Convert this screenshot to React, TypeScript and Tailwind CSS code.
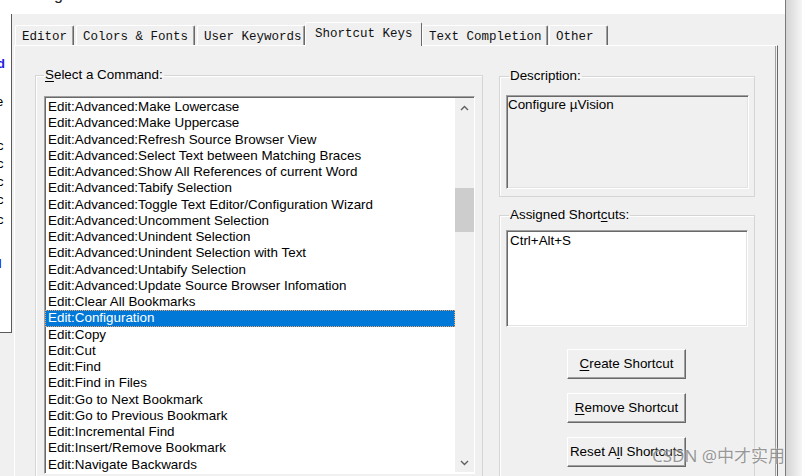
import React from "react";

const commands = [
  "Edit:Advanced:Make Lowercase",
  "Edit:Advanced:Make Uppercase",
  "Edit:Advanced:Refresh Source Browser View",
  "Edit:Advanced:Select Text between Matching Braces",
  "Edit:Advanced:Show All References of current Word",
  "Edit:Advanced:Tabify Selection",
  "Edit:Advanced:Toggle Text Editor/Configuration Wizard",
  "Edit:Advanced:Uncomment Selection",
  "Edit:Advanced:Unindent Selection",
  "Edit:Advanced:Unindent Selection with Text",
  "Edit:Advanced:Untabify Selection",
  "Edit:Advanced:Update Source Browser Infomation",
  "Edit:Clear All Bookmarks",
  "Edit:Configuration",
  "Edit:Copy",
  "Edit:Cut",
  "Edit:Find",
  "Edit:Find in Files",
  "Edit:Go to Next Bookmark",
  "Edit:Go to Previous Bookmark",
  "Edit:Incremental Find",
  "Edit:Insert/Remove Bookmark",
  "Edit:Navigate Backwards",
];

const tabs = [
  { label: "Editor", w: "w-[59px] mr-[2px]" },
  { label: "Colors & Fonts", w: "w-[119px] mr-[2px]" },
  { label: "User Keywords", w: "w-[108px]" },
  { label: "Shortcut Keys", w: "w-[117px]", active: true },
  { label: "Text Completion", w: "w-[126px] mr-[1px]" },
  { label: "Other", w: "w-[59px]" },
];

const Chevron = ({ down }: { down?: boolean }) => (
  <svg width="9" height="6" viewBox="0 0 9 6" className={down ? "rotate-180" : ""}>
    <path d="M1 5 L4.5 1.5 L8 5" fill="none" stroke="#606060" strokeWidth="1.4" />
  </svg>
);

const Button = ({ first, rest, pre = "" }: { first: string; rest: string; pre?: string }) => (
  <button className="h-[30px] w-[119px] bg-[#f0f0f0] border border-t-white border-l-white border-b-[#696969] border-r-[#696969] shadow-[inset_-1px_-1px_0_#a0a0a0] text-[13.4px] leading-[16px] text-black">
    {pre}
    <span className="underline underline-offset-2">{first}</span>
    {rest}
  </button>
);

const App = () => {
  return (
    <div
      className="relative flex h-[476px] w-[802px] overflow-hidden bg-[#f0f0f0] text-black"
      style={{ fontFamily: '"Liberation Sans", Arial, sans-serif' }}
    >
      {/* dialog window */}
      <div className="flex w-[786px] flex-col border-r border-r-[#7a7a7a]">
        {/* title bar, cut off at the top */}
        <div className="h-[14px] shrink-0 overflow-hidden bg-white">
          <span className="ml-[54px] mt-[-13px] block text-[16px] leading-[16px] text-[#222]">g</span>
        </div>

        <div className="flex flex-1">
          {/* window behind, peeking out on the left */}
          <div className="flex w-[12px] shrink-0 flex-col">
            <div className="h-[319px] overflow-hidden border-r border-b border-[#5a5a5a] bg-white text-[13px] leading-[16px]">
              <div className="ml-[-3px] mt-[42px] font-bold text-[#2020e0]">d</div>
              <div className="ml-[-4px] mt-[22px]">e</div>
              <div className="ml-[-3px] mt-[28px]">c</div>
              <div className="ml-[-3px] mt-[2px]">c</div>
              <div className="ml-[-3px] mt-[2px]">c</div>
              <div className="ml-[-3px] mt-[2px]">c</div>
              <div className="ml-[-3px] mt-[4px]">c</div>
              <div className="ml-[-2px] mt-[28px] font-bold text-[#2020e0]">I</div>
            </div>
            <div className="flex-1 bg-[#f0f0f0]" />
          </div>

          {/* dialog body */}
          <div className="flex flex-1 flex-col bg-[#f0f0f0] pl-[2px] pt-[8px]">
            {/* tabs */}
            <div
              className="flex h-[23px] items-end pl-[1px]"
              style={{ fontFamily: '"Liberation Mono", "Courier New", monospace' }}
            >
              {tabs.map((t) =>
                t.active ? (
                  <div
                    key={t.label}
                    className={`${t.w} relative z-10 mb-[-1px] h-[24px] rounded-t-[2px] border-t border-l border-r border-t-white border-l-white border-r-[#696969] bg-[#f0f0f0] pl-[9px] pt-[1px] text-[12.5px] leading-[21px] text-[#111]`}
                  >
                    {t.label}
                  </div>
                ) : (
                  <div
                    key={t.label}
                    className={`${t.w} h-[20px] rounded-t-[2px] border-t border-l border-r border-t-white border-l-white border-r-[#696969] bg-[#f0f0f0] pl-[6px] pt-[1px] text-[12.5px] leading-[20px] text-[#111] shadow-[inset_-1px_0_0_#a0a0a0]`}
                  >
                    {t.label}
                  </div>
                )
              )}
            </div>

            {/* tab panel */}
            <div className="flex w-[764px] flex-1 border-t border-l border-r border-t-white border-l-white border-r-[#696969] shadow-[inset_-1px_0_0_#f0f0f0,inset_-2px_0_0_#a0a0a0]">
              {/* select a command */}
              <fieldset className="ml-[20px] mt-[21px] h-[440px] w-[448px] shrink-0 border border-[#d5d5d5] pl-[8px] pr-[7px] shadow-[inset_1px_1px_0_#fff]">
                <legend className="px-[1px] text-[13.4px] leading-[16px]">
                  <span className="underline underline-offset-2">S</span>elect a Command:
                </legend>
                <div className="mt-[13px] flex h-[378px] border border-t-[#a0a0a0] border-l-[#a0a0a0] border-b-white border-r-white bg-white shadow-[inset_1px_1px_0_#696969]">
                  <div className="flex-1 overflow-hidden pt-[2px] text-[13.4px]">
                    {commands.map((c) =>
                      c === "Edit:Configuration" ? (
                        <div
                          key={c}
                          className="h-[16.25px] bg-[#0078d7] pl-[3px] leading-[16px] text-white outline-1 -outline-offset-1 outline-dotted outline-[#f0a060]"
                        >
                          {c}
                        </div>
                      ) : (
                        <div key={c} className="h-[16.25px] whitespace-nowrap pl-[3px] leading-[16px]">
                          {c}
                        </div>
                      )
                    )}
                  </div>
                  {/* scrollbar */}
                  <div className="mt-[1px] mb-[1px] flex w-[19px] flex-col bg-[#f0f0f0]">
                    <div className="flex h-[17px] items-center justify-center pt-[2px]">
                      <Chevron />
                    </div>
                    <div className="mt-[73px] h-[44px] bg-[#cdcdcd]" />
                    <div className="flex-1" />
                    <div className="flex h-[17px] items-center justify-center pb-[2px]">
                      <Chevron down />
                    </div>
                  </div>
                </div>
              </fieldset>

              {/* right column */}
              <div className="ml-[16px] flex w-[256px] flex-col">
                <fieldset className="mt-[22px] border border-[#d5d5d5] pb-[7px] pl-[6px] pr-[5px] shadow-[inset_1px_1px_0_#fff]">
                  <legend className="ml-[3px] px-[1px] text-[13.4px] leading-[16px]">Description:</legend>
                  <div className="mt-[11px] h-[94px] border border-t-[#a0a0a0] border-l-[#a0a0a0] border-b-white border-r-white bg-[#f0f0f0] pl-[1px] pt-[1px] text-[13.4px] leading-[16px] shadow-[inset_1px_1px_0_#696969,inset_-1px_-1px_0_#e3e3e3]">
                    Configure µVision
                  </div>
                </fieldset>

                <fieldset className="mt-[10px] h-[300px] border border-[#d5d5d5] pl-[6px] pr-[6px] shadow-[inset_1px_1px_0_#fff]">
                  <legend className="ml-[3px] px-[1px] text-[13.4px] leading-[16px]">
                    Assigned Short<span className="underline underline-offset-2">c</span>uts:
                  </legend>
                  <div className="mt-[7px] h-[97px] w-[242px] border border-t-[#a0a0a0] border-l-[#a0a0a0] border-b-white border-r-white bg-white pl-[3px] pt-[2px] text-[13.4px] leading-[16px] shadow-[inset_1px_1px_0_#696969,inset_-1px_-1px_0_#e3e3e3]">
                    Ctrl+Alt+S
                  </div>
                  <div className="mt-[22px] flex flex-col items-center gap-[14px] pr-[1px]">
                    <Button first="C" rest="reate Shortcut" />
                    <Button first="R" rest="emove Shortcut" />
                    <Button pre="Reset A" first="l" rest="l Shortcuts" />
                  </div>
                </fieldset>
              </div>
            </div>
          </div>
        </div>
      </div>

      {/* drop shadow of the window */}
      <div className="flex-1 bg-gradient-to-r from-[#d4d4d4] to-[#f6f6f6]" />

      {/* watermark */}
      <div
        className="pointer-events-none absolute left-[652px] top-[445px] whitespace-nowrap text-[17px] leading-[22px] text-[rgba(120,120,120,0.75)] [text-shadow:0_0_2px_rgba(255,255,255,0.8)]"
        style={{ fontFamily: '"Noto Sans", "Noto Sans CJK SC", sans-serif' }}
      >
        CSDN @中才实用
      </div>
    </div>
  );
};

export default App;
